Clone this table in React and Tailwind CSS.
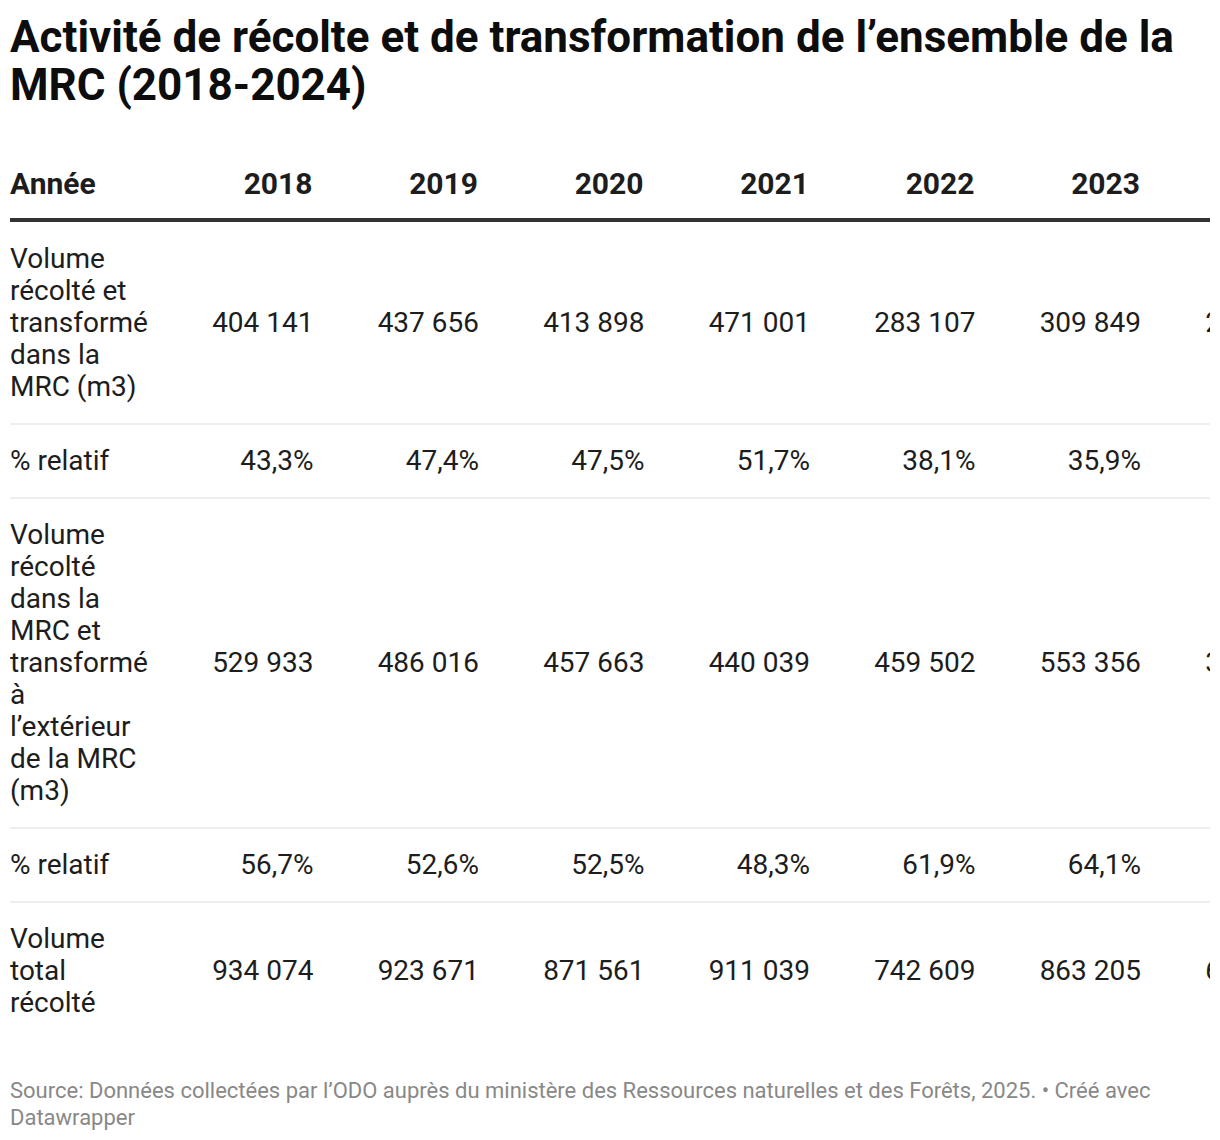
import React from "react";

const years = ["2018", "2019", "2020", "2021", "2022", "2023", "2024"];

const rows = [
  {
    label: "Volume récolté et transformé dans la MRC (m3)",
    values: ["404 141", "437 656", "413 898", "471 001", "283 107", "309 849", "283 912"],
  },
  {
    label: "% relatif",
    values: ["43,3%", "47,4%", "47,5%", "51,7%", "38,1%", "35,9%", "42,4%"],
  },
  {
    label: "Volume récolté dans la MRC et transformé à l’extérieur de la MRC (m3)",
    values: ["529 933", "486 016", "457 663", "440 039", "459 502", "553 356", "385 620"],
  },
  {
    label: "% relatif",
    values: ["56,7%", "52,6%", "52,5%", "48,3%", "61,9%", "64,1%", "57,6%"],
  },
  {
    label: "Volume total récolté",
    values: ["934 074", "923 671", "871 561", "911 039", "742 609", "863 205", "669 532"],
  },
];

export default function App() {
  return (
    <div className="bg-white px-[10px] pt-[13px] font-['Roboto',sans-serif]">
      {/* Titre */}
      <h1 className="text-[44px] leading-[48px] font-bold text-[#0d0d0d]">
        Activité de récolte et de transformation de l’ensemble de la MRC
        (2018-2024)
      </h1>

      {/* Tableau */}
      <div className="mt-[59px] w-[1200px] overflow-hidden">
        <table className="table-fixed w-[1306.5px] border-collapse text-[#1d1d1d]">
          <thead>
            <tr className="border-b-4 border-[#333]">
              <th className="w-[148px] pr-[8px] pb-[18px] text-left align-bottom text-[30px] leading-[32px] font-bold">
                Année
              </th>
              {years.map((y) => (
                <th
                  key={y}
                  className="w-[165.5px] pr-[11px] pb-[18px] text-right align-bottom text-[30px] leading-[32px] font-bold tabular-nums"
                >
                  {y}
                </th>
              ))}
            </tr>
          </thead>
          <tbody>
            {rows.map((row, i) => (
              <tr
                key={i}
                className={
                  i < rows.length - 1 ? "border-b-2 border-[#eeeeee]" : ""
                }
              >
                <td
                  className={`pr-[8px] pb-[20px] text-left align-top text-[28px] leading-[32px] ${
                    i === 0 ? "pt-[21px]" : "pt-[20px]"
                  }`}
                >
                  {row.label}
                </td>
                {row.values.map((v, j) => (
                  <td
                    key={j}
                    className="pr-[10px] text-right align-middle text-[28px] leading-[32px] tabular-nums whitespace-nowrap"
                  >
                    {v}
                  </td>
                ))}
              </tr>
            ))}
          </tbody>
        </table>
      </div>

      {/* Source */}
      <p className="mt-[38px] w-[1160px] text-[22px] leading-[27px] text-[#888888]">
        Source: Données collectées par l’ODO auprès du ministère des Ressources
        naturelles et des Forêts, 2025. • Créé avec Datawrapper
      </p>
    </div>
  );
}
